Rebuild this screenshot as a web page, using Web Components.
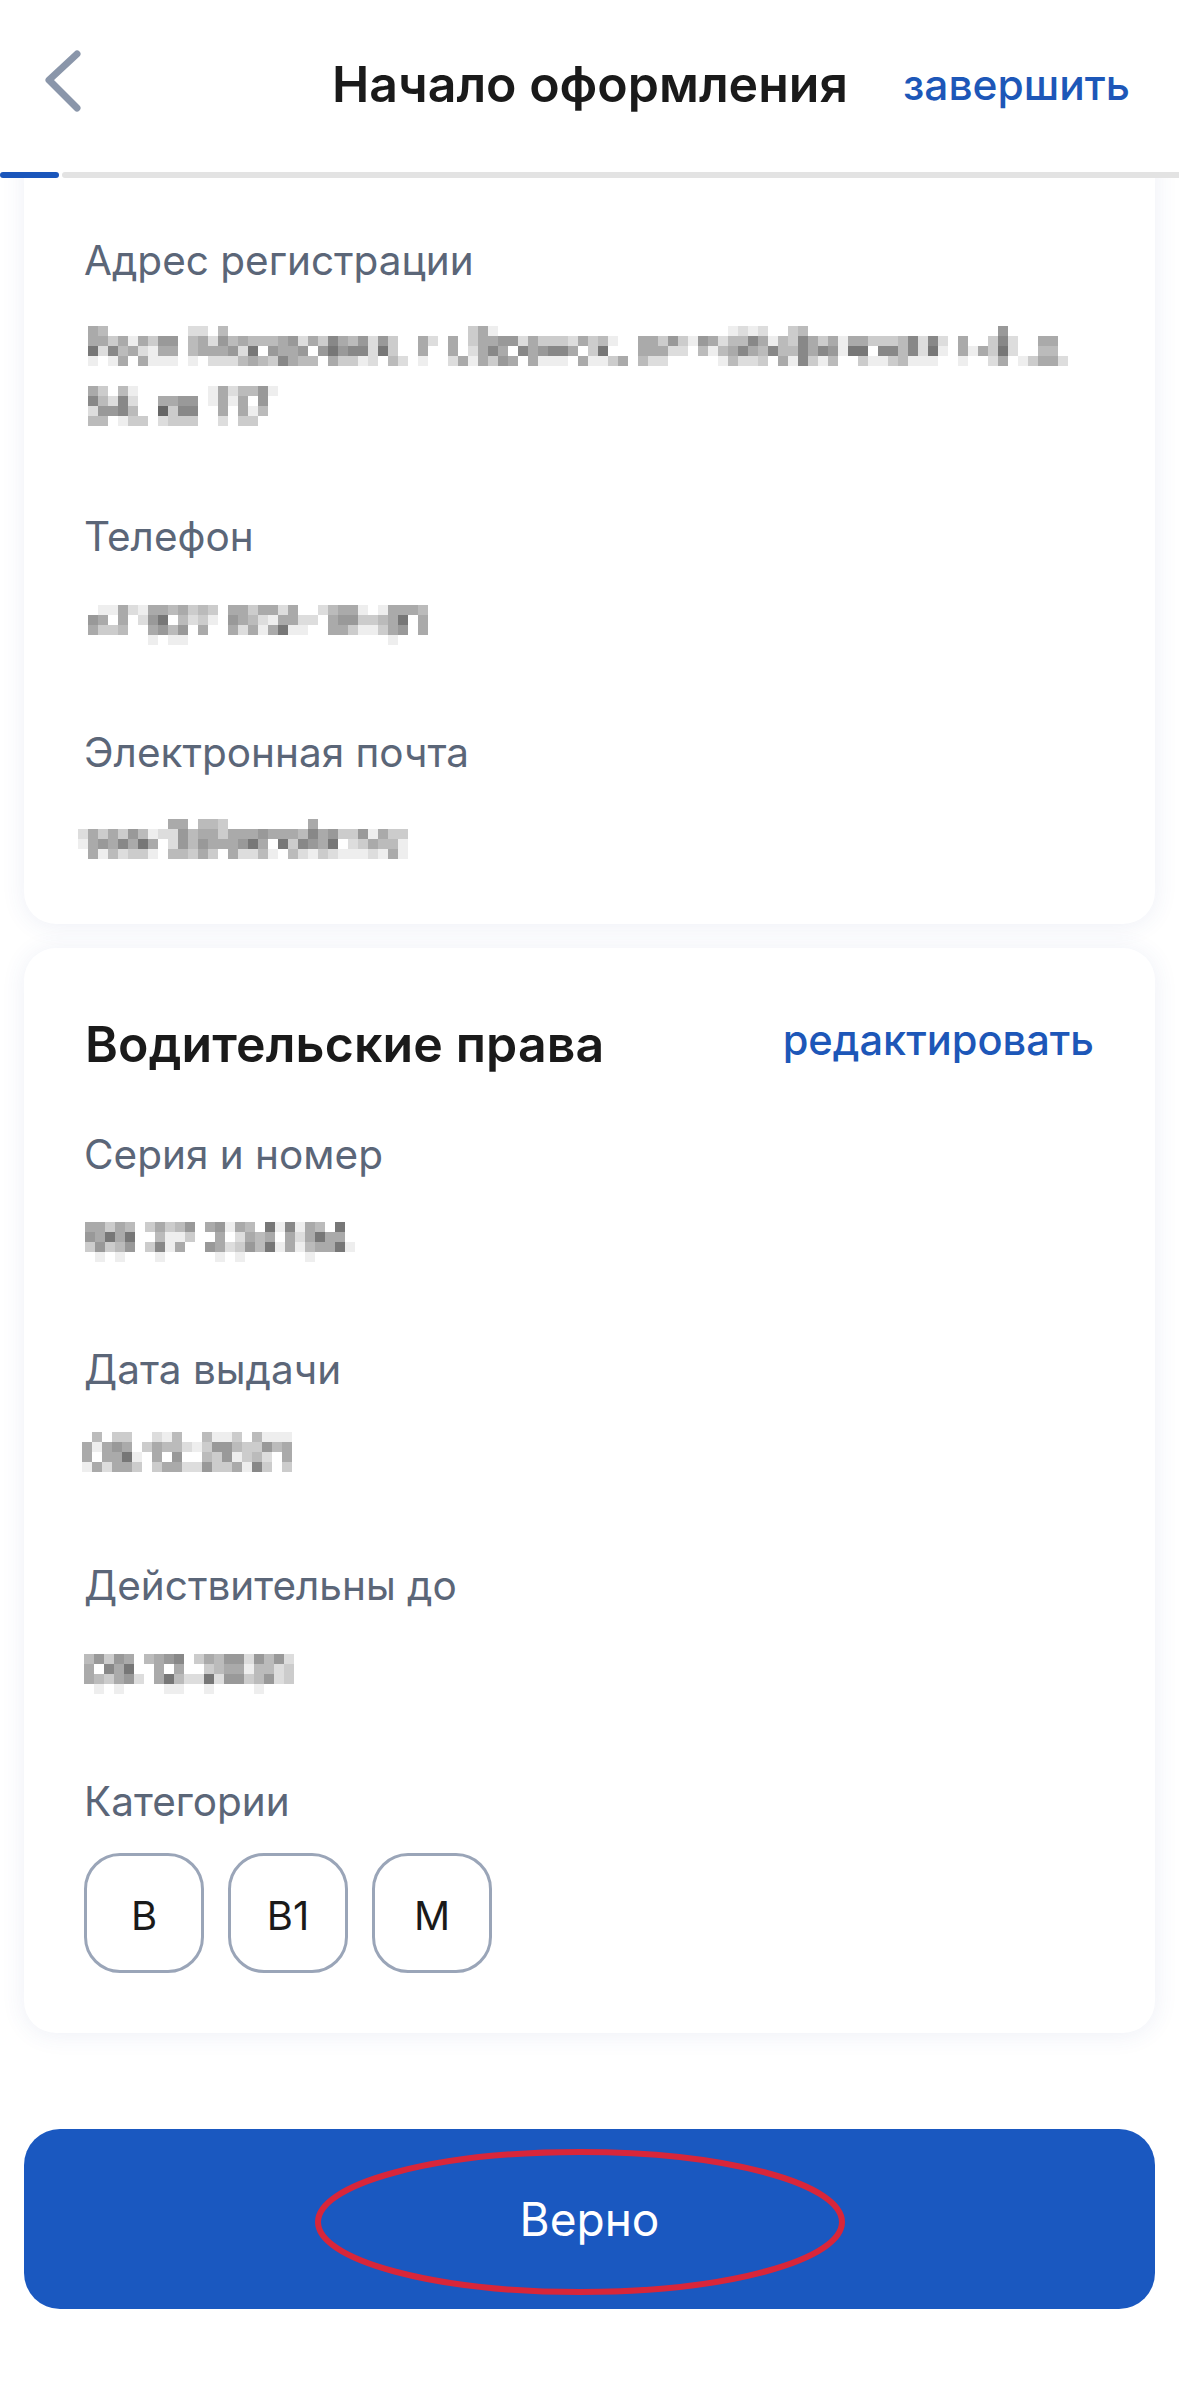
<!DOCTYPE html>
<html lang="ru">
<head>
<meta charset="utf-8">
<title>Начало оформления</title>
<style>
  html, body { margin: 0; padding: 0; background: #fff; }
  body { font-family: Inter, "Noto Sans", sans-serif; width: 1179px; height: 2383px; overflow: hidden; }
</style>
</head>
<body>
<check-page>
  <app-header slot="header" title="Начало оформления" action="завершить"></app-header>

  <info-card flat>
    <info-field label="Адрес регистрации" h="276">
      <pixel-value dx="4" dy="41" rows="abffffffffddfbffffffffffffffffffffffffcaefffffffffffffffffffffffededffcbfffffffffffffffffff9ffffffffff|aacaeac99fbad9babbba9dac8ab9d9cffadfafcaa99dacccdacbeffaac9ce9adbb8aebc8acaeaacccb8d8dfaffc8dffaaf|7d8badeaafbaaa9d7f9aa9f97988d7cffaffafda8af8a988afc7fffaaaddfbeba8ab8bb8a89e77f88b8d7efaeac7dffbbf|efeafaeeefefdddbabc8abbfaccedfbdfeffdaeac9afaeeefaeecafbddfffffebddcfae8cebffceecbeeeffeffdafecaad"></pixel-value>
      <pixel-value dx="4" dy="20" rows="acfbefffffffeadbb9e|8bd8dffaa99feaeaf9f|d998bff6c88ffafaebf|bbfeccfdcccffdfccff"></pixel-value>
    </info-field>
    <info-field label="Телефон" h="216">
      <pixel-value dx="4" dy="44" rows="feeadeaabacbcfaacaadaffdbaaefeaaab|9afafd97fbdcef9abdeaaddfa99ccba7fa|accbffa9b9faffadaea7eeffaaceeca9fa|ffffffefeeffffffffffffffffffffefff"></pixel-value>
    </info-field>
    <info-field label="Электронная почта" h="193">
      <pixel-value dx="-6" dy="42" rows="fffffffffaafbbcffffffffaffffffffff|dacac9bedd9baacaaa9aaab8a9cc9eaccf|ea9a8a7afd9b9aaa97af7c89a7fdcabbef|faebdccefbbcacfaddbefbdecdeeedeaef"></pixel-value>
    </info-field>
  </info-card>

  <info-card title="Водительские права" action="редактировать">
    <info-field label="Серия и номер" h="215">
      <pixel-value dx="1" dy="43" rows="aacabfcacb9fa9eabf7e8eabf7f|9a7a7ffbeecffafdabafada7aaf|c9cb9fc8eaff9adc9b7eaebaa7e|fefefffefffffefeffffffeffff"></pixel-value>
    </info-field>
    <info-field label="Дата выдачи" h="216">
      <pixel-value dx="-2" dy="38" rows="fbfccffdebffbeecfbeee|aea9afcabbdec99bcc9ba|afaa7efaf9ffbc9ecbdfa|eadaacfcaadd9ccae8cfc"></pixel-value>
    </info-field>
    <info-field label="Действительны до" h="216">
      <pixel-value dx="0" dy="44" rows="b9c9afba98fcab99d9b9d|af8a7ffafaffcbaaebbdc|abca9dfa7bdd7d99cb9dc|fefeffffeeffeffffefff"></pixel-value>
    </info-field>
    <info-field label="Категории">
      <div style="display:flex;gap:24px;margin-top:27px;margin-left:0">
        <category-chip>B</category-chip>
        <category-chip>B1</category-chip>
        <category-chip>M</category-chip>
      </div>
    </info-field>
  </info-card>

  <primary-button slot="footer">Верно</primary-button>
</check-page>

<script>
// Page shell: header on top, scrolled cards under it, button at the bottom
class CheckPage extends HTMLElement {
  constructor() {
    super();
    this.attachShadow({ mode: 'open' }).innerHTML = `
      <style>
        :host { display: flex; flex-direction: column; width: 1179px; height: 2383px; }
        main { flex: none; height: 1903px; overflow: hidden; padding: 0 24px; display: flex; flex-direction: column; gap: 24px; }
        main ::slotted(info-card[flat]) { margin-top: -40px; }
        footer { padding: 48px 24px 74px; }
      </style>
      <slot name="header"></slot>
      <main><slot></slot></main>
      <footer><slot name="footer"></slot></footer>`;
  }
}

class AppHeader extends HTMLElement {
  constructor() {
    super();
    this.attachShadow({ mode: 'open' });
  }
  connectedCallback() {
    this.shadowRoot.innerHTML = `
      <style>
        :host { display: block; position: relative; z-index: 2; background: #fff; }
        .bar { display: flex; justify-content: space-between; height: 172px; padding: 0 49px 0 44px; box-sizing: border-box; }
        svg { display: block; margin-top: 48px; }
        .right { display: flex; align-items: flex-start; gap: 55px; padding-top: 54px; }
        .title { font-size: 50px; line-height: 60px; font-weight: 600; color: #1a1a1a; }
        .action { font-size: 42.5px; line-height: 50px; font-weight: 500; color: #1d57b8; margin-top: 6px; }
        .track { display: flex; gap: 3px; height: 6px; }
        .done { width: 59px; background: #1a56bb; border-radius: 3px; }
        .rest { flex: 1; background: #e3e3e3; border-radius: 3px 0 0 3px; }
      </style>
      <div class="bar">
        <svg width="42" height="68" viewBox="0 0 42 68" fill="none">
          <path d="M33 6 L5 32 L33 60" stroke="#8a96aa" stroke-width="7" stroke-linecap="round" stroke-linejoin="round"/>
        </svg>
        <div class="right">
          <div class="title">${this.getAttribute('title')}</div>
          <div class="action">${this.getAttribute('action')}</div>
        </div>
      </div>
      <div class="track"><div class="done"></div><div class="rest"></div></div>`;
  }
}

class InfoCard extends HTMLElement {
  constructor() {
    super();
    this.attachShadow({ mode: 'open' });
  }
  connectedCallback() {
    const title = this.getAttribute('title');
    const head = title ? `
      <div class="head">
        <div class="title">${title}</div>
        <div class="action">${this.getAttribute('action')}</div>
      </div>` : '';
    this.shadowRoot.innerHTML = `
      <style>
        :host { display: block; background: #fff; border-radius: 32px; padding: 68px 61px 60px 60px; box-shadow: 0 2px 24px rgba(60, 80, 160, 0.09); flex: none; }
        :host([flat]) { padding-top: 99px; padding-bottom: 0; height: 786px; box-sizing: border-box; }
        .head { display: flex; justify-content: space-between; align-items: flex-start; height: 115px; }
        .title { font-size: 50px; line-height: 60px; font-weight: 600; color: #1a1a1a; letter-spacing: 0.13px; margin: -2px 0 0 1px; }
        .action { font-size: 41.6px; line-height: 48px; font-weight: 500; color: #1d57b8; }
      </style>
      ${head}
      <slot></slot>`;
  }
}

class InfoField extends HTMLElement {
  constructor() {
    super();
    this.attachShadow({ mode: 'open' });
  }
  connectedCallback() {
    const h = this.getAttribute('h');
    this.shadowRoot.innerHTML = `
      <style>
        :host { display: block; ${h ? `height: ${h}px;` : ''} }
        .label { font-size: 40.5px; line-height: 48px; color: #5b6678; }
      </style>
      <div class="label">${this.getAttribute('label')}</div>
      <slot></slot>`;
  }
}

// Redacted value: the screenshot shows it as a mosaic, each row is a string of
// hex digits, one grey level per 10px block
class PixelValue extends HTMLElement {
  constructor() {
    super();
    this.attachShadow({ mode: 'open' });
  }
  connectedCallback() {
    const rows = this.getAttribute('rows').split('|');
    const cols = Math.max(...rows.map(r => r.length));
    let rects = '';
    rows.forEach((row, y) => {
      [...row].forEach((c, x) => {
        if (c !== 'f') rects += `<rect x="${x * 10}" y="${y * 10}" width="10" height="10" fill="#${c}${c}${c}"/>`;
      });
    });
    this.shadowRoot.innerHTML = `
      <style>
        :host { display: block; margin: ${this.getAttribute('dy')}px 0 0 ${this.getAttribute('dx')}px; }
        svg { display: block; }
      </style>
      <svg width="${cols * 10}" height="${rows.length * 10}" shape-rendering="crispEdges">${rects}</svg>`;
  }
}

class CategoryChip extends HTMLElement {
  constructor() {
    super();
    this.attachShadow({ mode: 'open' }).innerHTML = `
      <style>
        :host { display: flex; align-items: center; justify-content: center; width: 120px; height: 120px; box-sizing: border-box; border: 3px solid #9aa5b8; border-radius: 36px; font-size: 40px; color: #1a1a1a; padding-top: 5px; }
      </style>
      <slot></slot>`;
  }
}

class PrimaryButton extends HTMLElement {
  constructor() {
    super();
    this.attachShadow({ mode: 'open' }).innerHTML = `
      <style>
        :host { display: flex; align-items: center; justify-content: center; position: relative; height: 180px; background: #1a58c0; border-radius: 36px; color: #fff; font-size: 46px; }
        svg { position: absolute; left: 291px; top: 19px; }
      </style>
      <slot></slot>
      <svg width="530" height="148" viewBox="0 0 530 148" fill="none">
        <ellipse cx="265" cy="74" rx="262" ry="70" stroke="#d8263a" stroke-width="6"/>
      </svg>`;
  }
}

customElements.define('check-page', CheckPage);
customElements.define('app-header', AppHeader);
customElements.define('info-card', InfoCard);
customElements.define('info-field', InfoField);
customElements.define('pixel-value', PixelValue);
customElements.define('category-chip', CategoryChip);
customElements.define('primary-button', PrimaryButton);
</script>
</body>
</html>
